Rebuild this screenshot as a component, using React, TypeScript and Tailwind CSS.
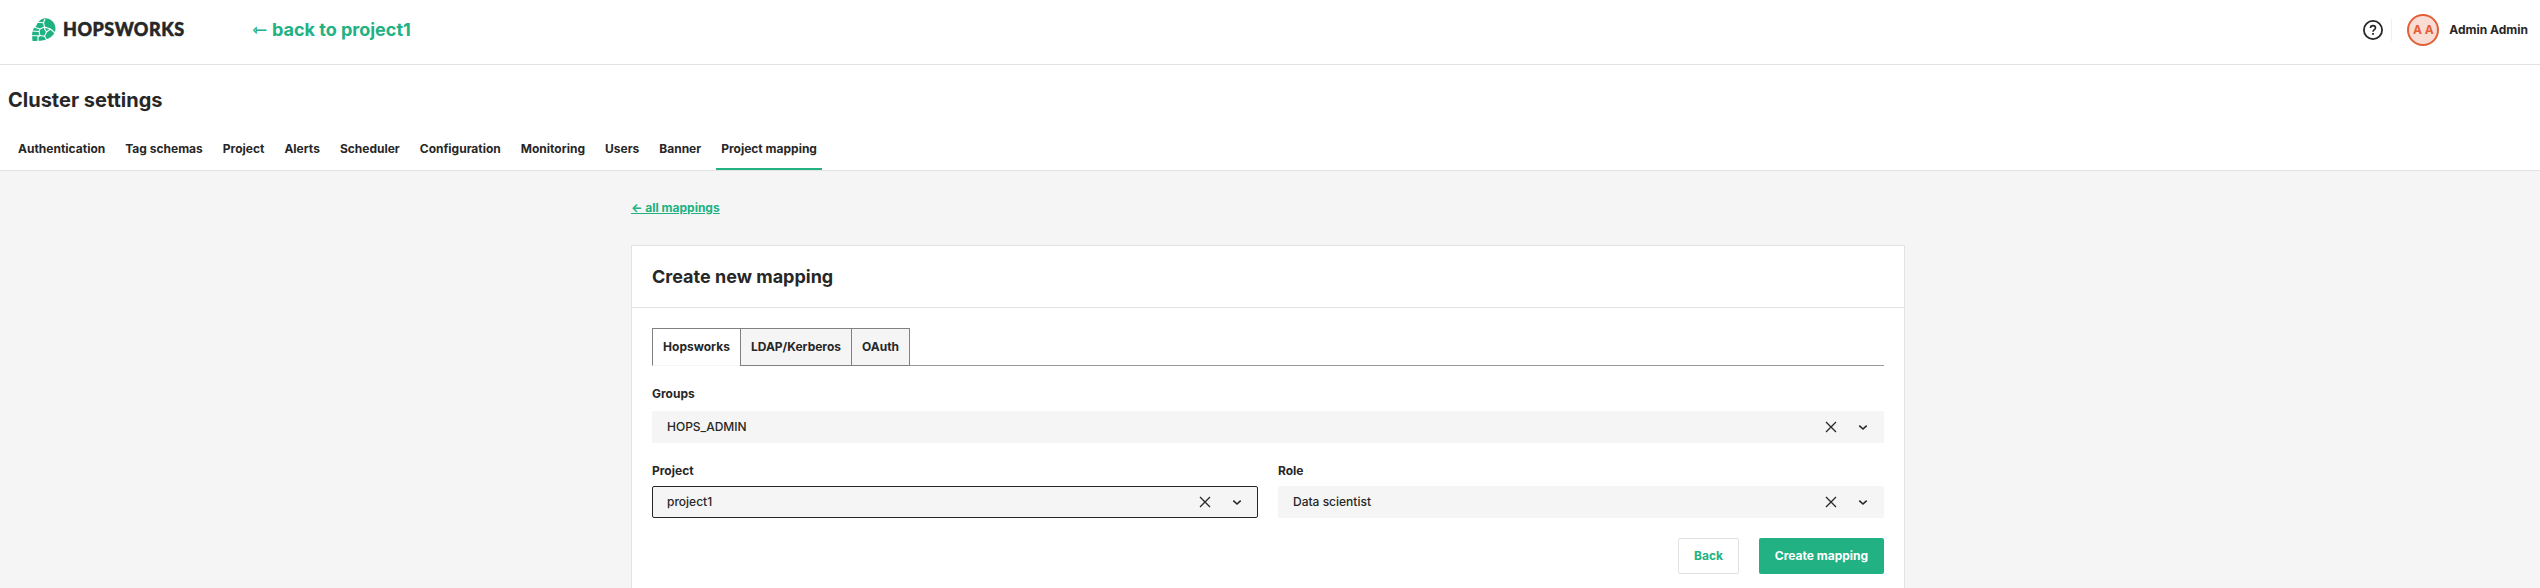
import React from "react";

const tabs = [
  "Authentication",
  "Tag schemas",
  "Project",
  "Alerts",
  "Scheduler",
  "Configuration",
  "Monitoring",
  "Users",
  "Banner",
  "Project mapping",
];

function Logo() {
  return (
    <div className="flex items-center">
      <svg width="24" height="23" viewBox="0 0 24 23" className="block">
        <path
          d="M13 .2C18.500 0 23.500 4.500 23.500 10.500 23.500 15 20 19 16.500 20.500 13 22.300 9 23 .5 23 0 18 -.2 14 1.500 10.800L4.500 7.500C6 3.500 9 .5 13 .2Z"
          fill="#1eb182"
        />
        <path
          d="M5.500 4.200 11.500 4.800 12.500 9 18.500 11 23 15M12.500 9 8 11 2.500 9.300M8 11 7 13.500 0 13M7 13.500 8 17.500 0 17.800M8 17.500 6 18.800 6 23.500M8 17.500 12.500 18.300 15 22.500M12.500 18.300 14.500 14 13 11.800M14.500 14 18.500 11M13 11.800 12.500 9M11.500 4.800 13 1"
          fill="none"
          stroke="#fff"
          strokeWidth="1.100"
        />
      </svg>
      <span className="ml-[7px] font-['Lato',sans-serif] text-[18px] leading-[23px] font-black tracking-[0.5px] text-[#272727] [-webkit-text-stroke:0.5px_#272727]">
        HOPSWORKS
      </span>
    </div>
  );
}

function Select({ value, focused = false }: { value: string; focused?: boolean }) {
  return (
    <div
      className={
        focused
          ? "flex h-8 items-center rounded-[2px] border border-[#272727] bg-[#f5f5f5] px-[14px]"
          : "flex h-8 items-center rounded-[2px] border border-[#f5f5f5] bg-[#f5f5f5] px-[14px]"
      }
    >
      <span className="flex-1 text-[12px] leading-4 font-medium">{value}</span>
      <svg width="12" height="12" viewBox="0 0 12 12" className="mr-[20px]">
        <path d="M1 1 11 11M11 1 1 11" stroke="#272727" strokeWidth="1.300" fill="none" />
      </svg>
      <svg width="12" height="12" viewBox="0 0 12 12">
        <path d="M2.300 4.600 6 8 9.700 4.600" stroke="#272727" strokeWidth="1.600" fill="none" />
      </svg>
    </div>
  );
}

function Field({ label, value, focused }: { label: string; value: string; focused?: boolean }) {
  return (
    <div className="flex flex-1 flex-col gap-2">
      <span className="text-[12px] leading-[15px] font-bold">{label}</span>
      <Select value={value} focused={focused} />
    </div>
  );
}

export default function App() {
  return (
    <div className="h-[588px] overflow-hidden bg-[#f5f5f5] font-['Inter',sans-serif] text-[#272727]">
      <header className="flex h-[65px] items-start border-b border-[#e2e2e2] bg-white pl-8">
        <div className="flex h-[59px] flex-1 items-center">
          <Logo />
          <a className="ml-[68px] text-[18px] leading-6 font-bold text-[#21b182]">
            <span className="font-['DejaVu_Sans',sans-serif]">⇽</span> back to project1
          </a>
        </div>
        <div className="flex h-[59px] items-center pr-3">
          <svg width="20" height="20" viewBox="0 0 20 20">
            <circle cx="10" cy="10" r="9.100" fill="none" stroke="#272727" strokeWidth="1.800" />
            <path
              d="M7.500 8C7.500 6.500 8.600 5.600 10 5.600S12.500 6.500 12.500 7.900C12.500 9.500 10 9.700 10 11.700"
              fill="none"
              stroke="#272727"
              strokeWidth="1.600"
            />
            <rect x="9.100" y="13" width="1.800" height="1.800" fill="#272727" />
          </svg>
          <div className="ml-2 h-[22px] w-px bg-[#f0f0f0]" />
          <div className="ml-[15px] flex size-8 items-center justify-center rounded-full border-2 border-[#e35f36] bg-[#f9dcd3] text-[12px] font-bold text-[#e35f36]">
            A A
          </div>
          <span className="ml-[10px] text-[12px] font-bold">Admin Admin</span>
        </div>
      </header>

      <div className="border-b border-[#e2e2e2] bg-white px-2">
        <h1 className="pt-[23px] text-[20px] leading-6 font-bold">Cluster settings</h1>
        <nav className="mt-[22px] flex h-9 gap-[10px] pl-[5px]">
          {tabs.map((tab) => (
            <div
              key={tab}
              className={
                tab === "Project mapping"
                  ? "border-b-2 border-[#21b182] px-[5px] pt-[7px] text-[12px] leading-[15px] font-bold"
                  : "px-[5px] pt-[7px] text-[12px] leading-[15px] font-bold"
              }
            >
              {tab}
            </div>
          ))}
        </nav>
      </div>

      <main className="ml-[631px] w-[1274px] pt-[29px]">
        <a className="block w-fit text-[12px] leading-[15px] font-bold text-[#21b182] underline">
          ← all mappings
        </a>
        <section className="mt-[30px] h-[400px] border border-[#e2e2e2] bg-white">
          <h2 className="flex h-[62px] items-center border-b border-[#e2e2e2] px-5 text-[18px] font-bold">
            Create new mapping
          </h2>
          <div className="px-5 pt-5">
            <div className="flex h-[38px] items-stretch text-[12px] font-bold">
              <div className="flex w-[89px] items-center justify-center border border-[#808080] border-b-[#f5f5f5] bg-white">
                Hopsworks
              </div>
              <div className="-ml-px flex w-[112px] items-center justify-center border border-[#808080] bg-[#f5f5f5]">
                LDAP/Kerberos
              </div>
              <div className="-ml-px flex w-[59px] items-center justify-center border border-[#808080] bg-[#f5f5f5]">
                OAuth
              </div>
              <div className="flex-1 border-b border-[#999999]" />
            </div>
            <div className="mt-5 flex flex-col">
              <span className="mb-[10px] text-[12px] leading-[15px] font-bold">Groups</span>
              <Select value="HOPS_ADMIN" />
            </div>
            <div className="mt-5 flex gap-5">
              <Field label="Project" value="project1" focused />
              <Field label="Role" value="Data scientist" />
            </div>
            <div className="mt-5 flex justify-end gap-5 text-[12px] font-bold">
              <button className="h-9 w-[61px] rounded-[2px] border border-[#e2e2e2] bg-white text-[#21b182]">
                Back
              </button>
              <button className="h-9 w-[125px] rounded-[2px] bg-[#21b182] text-white">Create mapping</button>
            </div>
          </div>
        </section>
      </main>
    </div>
  );
}
